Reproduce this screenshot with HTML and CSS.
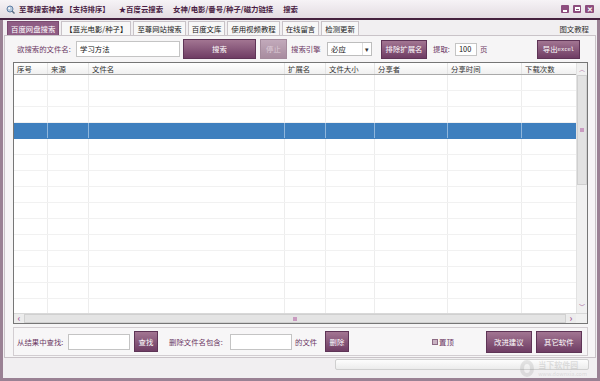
FILE: index.html
```html
<!DOCTYPE html>
<html lang="zh-CN">
<head>
  <meta charset="UTF-8" />
  <title>至尊搜索神器</title>
  <link rel="stylesheet" href="styles.css">
</head>
<body>
  <div class="window">
    <header class="titlebar">
      <svg class="app-icon" width="9" height="9" viewBox="0 0 9 9">
        <circle cx="4" cy="4" r="3" fill="#b9c9dc" stroke="#5f7fa6" stroke-width="1"/>
        <path d="M6 6 L8.5 8.5" stroke="#5a6b80" stroke-width="1.4"/>
        <circle cx="3.2" cy="3.2" r="1" fill="#fff"/>
      </svg>
      <span class="t1">至尊搜索神器</span>
      <span class="t2">【支持排序】</span>
      <span class="t3">★百度云搜索</span>
      <span class="t4">女神/电影/番号/种子/磁力链接</span>
      <span class="t5">搜索</span>
      <div class="win-btns">
        <span class="wb min"><i></i></span>
        <span class="wb max"><i></i></span>
        <span class="wb close">✕</span>
      </div>
    </header>

    <div class="frame">
      <nav class="tabs">
        <span class="tab active">百度网盘搜索</span>
        <span class="tab">【蓝光电影/种子】</span>
        <span class="tab">至尊网站搜索</span>
        <span class="tab">百度文库</span>
        <span class="tab">使用视频教程</span>
        <span class="tab">在线留言</span>
        <span class="tab">检测更新</span>
        <span class="help">图文教程</span>
      </nav>

      <section class="page">
        <div class="toolbar">
          <span class="label l-name">欲搜索的文件名:</span>
          <span class="input i-name">学习方法</span>
          <span class="btn b-search">搜索</span>
          <span class="btn disabled b-stop">停止</span>
          <span class="label l-engine">搜索引擎</span>
          <span class="select">必应<i class="drop">▾</i></span>
          <span class="btn b-ext">排除扩展名</span>
          <span class="label l-take">提取:</span>
          <span class="input i-pages">100</span>
          <span class="label l-page">页</span>
          <span class="btn b-export">导出<small>excel</small></span>
        </div>

        <div class="grid">
          <div class="grid-main">
            <div class="cols">
              <div class="row head">
                <span>序号</span><span>来源</span><span>文件名</span><span>扩展名</span><span>文件大小</span><span>分享者</span><span>分享时间</span><span>下载次数</span>
              </div>
              <div class="row"><span></span><span></span><span></span><span></span><span></span><span></span><span></span><span></span></div>
              <div class="row"><span></span><span></span><span></span><span></span><span></span><span></span><span></span><span></span></div>
              <div class="row"><span></span><span></span><span></span><span></span><span></span><span></span><span></span><span></span></div>
              <div class="row selected"><span></span><span></span><span></span><span></span><span></span><span></span><span></span><span></span></div>
              <div class="row"><span></span><span></span><span></span><span></span><span></span><span></span><span></span><span></span></div>
              <div class="row"><span></span><span></span><span></span><span></span><span></span><span></span><span></span><span></span></div>
              <div class="row"><span></span><span></span><span></span><span></span><span></span><span></span><span></span><span></span></div>
              <div class="row"><span></span><span></span><span></span><span></span><span></span><span></span><span></span><span></span></div>
              <div class="row"><span></span><span></span><span></span><span></span><span></span><span></span><span></span><span></span></div>
              <div class="row"><span></span><span></span><span></span><span></span><span></span><span></span><span></span><span></span></div>
              <div class="row"><span></span><span></span><span></span><span></span><span></span><span></span><span></span><span></span></div>
              <div class="row"><span></span><span></span><span></span><span></span><span></span><span></span><span></span><span></span></div>
              <div class="row"><span></span><span></span><span></span><span></span><span></span><span></span><span></span><span></span></div>
              <div class="row"><span></span><span></span><span></span><span></span><span></span><span></span><span></span><span></span></div>
              <div class="row"><span></span><span></span><span></span><span></span><span></span><span></span><span></span><span></span></div>
            </div>
            <div class="vscroll">
              <span class="arrow">︿</span>
              <span class="thumb"><i class="grip"></i></span>
              <span class="track"></span>
              <span class="arrow">﹀</span>
            </div>
          </div>
          <div class="hscroll">
            <span class="arrow">‹</span>
            <span class="thumb"><i class="grip"></i></span>
            <span class="arrow">›</span>
            <span class="corner"></span>
          </div>
        </div>

        <div class="bottom">
          <span class="label l-find">从结果中查找:</span>
          <span class="input i-find"></span>
          <span class="btn b-find">查找</span>
          <span class="label l-del">删除文件名包含:</span>
          <span class="input i-del"></span>
          <span class="label l-file">的文件</span>
          <span class="btn b-del">删除</span>
          <span class="check"><i></i>置顶</span>
          <span class="btn b-suggest">改进建议</span>
          <span class="btn b-other">其它软件</span>
        </div>
      </section>

      <footer class="status">
        <div class="progress"></div>
      </footer>

      <div class="watermark">
        <span class="wm-logo"></span>
        <span class="wm-text"><b>当下软件园</b><small>www.downxia.com</small></span>
      </div>
    </div>
  </div>
</body>
</html>
```

FILE: styles.css
```css
/* reset */
* {
  margin: 0;
  padding: 0;
  box-sizing: border-box;
}

:root {
  --purple: #6c3864;
  --frame: #9a8194;
  --line: #c9c3c8;
  --btn-top: #a27592;
  --btn-bot: #6f3d64;
}

html, body {
  width: 600px;
  height: 381px;
  overflow: hidden;
}

body {
  font-family: "Noto Sans CJK SC", "Noto Sans", sans-serif;
  font-size: 7.4px;
  line-height: 1;
  color: #222;
  background: #f3f1f3;
}

.window {
  height: 381px;
  display: flex;
  flex-direction: column;
}

/* --- title bar ------------------------------------------------------ */
.titlebar {
  height: 20px;
  flex: none;
  display: flex;
  align-items: center;
  padding-left: 6px;
  background: linear-gradient(#f6f3f6, #e3dce2);
  border-bottom: 2px solid #45213f;
  color: #4a1d44;
  font-weight: 700;
  white-space: nowrap;
}
.app-icon { flex: none; margin-right: 4px; }
.t2 { margin-left: 2px; }
.t3 { margin-left: 9px; }
.t4 { margin-left: 10px; }
.t5 { margin-left: 10px; }

.win-btns {
  margin-left: auto;
  margin-right: 6px;
  display: flex;
  gap: 4px;
}
.wb {
  width: 8px;
  height: 8px;
  background: #8d4d7e;
  border-radius: 1px;
  display: flex;
  align-items: center;
  justify-content: center;
  color: #fff;
  font-size: 7px;
}
.wb.close { width: 9px; }
.wb.min i { width: 4px; height: 2px; background: #fff; margin-top: 3px; }
.wb.max i { width: 5px; height: 4px; border: 1px solid #fff; border-top-width: 2px; }

/* --- frame ---------------------------------------------------------- */
.frame {
  position: relative;
  flex: 1;
  display: flex;
  flex-direction: column;
  border: 3px solid var(--frame);
  border-top: 0;
  background: #f1eff1;
}

.tabs {
  height: 15px;
  display: flex;
  align-items: flex-end;
  padding-left: 4px;
  gap: 2px;
}
.tab {
  height: 14px;
  padding: 0 3px;
  display: flex;
  align-items: center;
  border: 1px solid var(--line);
  border-bottom: 0;
  background: #f7f7f7;
  color: #222;
  white-space: nowrap;
}
.tab.active {
  background: #8e5c84;
  border-color: #7a4a70;
  color: #fff;
}
.help {
  margin-left: auto;
  margin-right: 8px;
  align-self: center;
  padding-top: 2px;
  color: #333;
}

.page {
  margin: 0 1px;
  height: 323px;
  flex: none;
  border: 1px solid var(--line);
  background: #f6f5f6;
  padding: 3px 7px 1px 8px;
  display: flex;
  flex-direction: column;
  gap: 3px;
}

/* --- controls ------------------------------------------------------- */
.toolbar, .bottom {
  display: flex;
  align-items: center;
  white-space: nowrap;
}
.toolbar { height: 20px; flex: none; }

.label { color: var(--purple); }
.input {
  height: 16px;
  display: flex;
  align-items: center;
  padding-left: 3px;
  background: #fff;
  border: 1px solid #c4c4c4;
  color: #111;
}
.btn {
  height: 20px;
  display: flex;
  align-items: center;
  justify-content: center;
  background: linear-gradient(var(--btn-top), var(--btn-bot));
  border: 1px solid #5e3456;
  color: #fff;
}
.btn.disabled {
  background: linear-gradient(#c2aabb, #a88c9f);
  border-color: #a48a9c;
  color: #dccbd7;
}
.btn small {
  display: block;
  font-size: 5.5px;
  line-height: 1;
  margin-top: 1px;
  font-family: "DejaVu Sans Mono", monospace;
}

.l-name { margin-left: 4px; width: 59px; }
.i-name { width: 104px; }
.b-search { margin-left: 3px; width: 73px; }
.b-stop { margin-left: 4px; width: 27px; }
.l-engine { margin-left: 4px; width: 32px; }
.select {
  margin-left: 4px;
  width: 45px;
  height: 14px;
  display: flex;
  align-items: center;
  padding-left: 3px;
  background: #fff;
  border: 1px solid #bdbdbd;
  color: #111;
}
.drop {
  margin-left: auto;
  width: 9px;
  height: 12px;
  display: flex;
  align-items: center;
  justify-content: center;
  border-left: 1px solid #ddd;
  font-style: normal;
  font-size: 7px;
  color: #333;
}
.b-ext { margin-left: 9px; width: 46px; height: 19px; }
.l-take { margin-left: 6px; width: 20px; }
.i-pages { margin-left: 2px; width: 22px; height: 13px; }
.l-page { margin-left: 3px; }
.b-export { margin-left: auto; margin-right: 8px; width: 43px; height: 19px; }

/* --- grid ----------------------------------------------------------- */
.grid {
  height: 262px;
  flex: none;
  border: 1px solid #767676;
  background: #fff;
  display: flex;
  flex-direction: column;
}
.grid-main {
  height: 250px;
  display: flex;
}
.cols {
  width: 562px;
  overflow: hidden;
}
.row {
  height: 16px;
  display: grid;
  grid-template-columns: 34px 41px 196px 41px 49px 73px 74px 54px;
  border-bottom: 1px solid #f1f1f1;
}
.row span { border-right: 1px solid #ededed; }
.row span:last-child { border-right: 0; }
.row.head {
  height: 12px;
  background: linear-gradient(#fff, #f0f0f0);
  border-bottom: 1px solid #a9a9a9;
  color: #333;
}
.row.head span {
  padding-left: 3px;
  line-height: 11px;
  border-right-color: #e4e4e4;
}
.row.selected { background: #3e7fbe; border-bottom-color: #3e7fbe; }
.row.selected span { border-right-color: #8fb6dc; }

.vscroll {
  width: 11px;
  display: flex;
  flex-direction: column;
  background: #f0f0f0;
  border-left: 1px solid #e2e2e2;
}
.vscroll .arrow {
  height: 12px;
  display: flex;
  align-items: center;
  justify-content: center;
  color: #a5659a;
  font-size: 6px;
}
.vscroll .thumb {
  height: 110px;
  display: flex;
  align-items: center;
  justify-content: center;
  background: #e2e2e2;
  border: 1px solid #cfcfcf;
}
.vscroll .track { flex: 1; }
.grip { width: 4px; height: 4px; background: #c99bc0; }

.hscroll {
  height: 10px;
  display: flex;
  background: #ececec;
  border-top: 1px solid #d8d8d8;
}
.hscroll .arrow {
  width: 10px;
  display: flex;
  align-items: center;
  justify-content: center;
  color: #a5659a;
  font-size: 9px;
  font-weight: 700;
}
.hscroll .thumb {
  flex: 1;
  display: flex;
  align-items: center;
  justify-content: center;
  background: #e4e4e4;
  border: 1px solid #d0d0d0;
}
.corner { width: 11px; background: #f0f0f0; }

/* --- bottom --------------------------------------------------------- */
.bottom {
  position: relative;
  z-index: 1;
  height: 29px;
  flex: none;
  border: 1px solid #d2cdd1;
  background: #f7f6f7;
}
.l-find { margin-left: 3px; width: 51px; }
.i-find { width: 62px; }
.b-find { margin-left: 4px; width: 24px; height: 21px; }
.l-del { margin-left: 11px; width: 61px; }
.i-del { width: 62px; }
.l-file { margin-left: 3px; width: 27px; }
.b-del { margin-left: 3px; width: 24px; height: 21px; }
.check {
  margin-left: 83px;
  display: flex;
  align-items: center;
  color: var(--purple);
}
.check i {
  width: 6px;
  height: 6px;
  margin-right: 1px;
  border: 1px solid #8c6a84;
  background: #c9b3c3;
}
.b-suggest { margin-left: 32px; width: 46px; height: 22px; }
.b-other { margin-left: 4px; width: 46px; height: 22px; }

/* --- status --------------------------------------------------------- */
.status {
  flex: 1;
  display: flex;
  justify-content: flex-end;
  padding: 1px 8px 0 0;
}
.progress {
  width: 254px;
  height: 11px;
  border: 1px solid #cfcfcf;
  border-radius: 2px;
  background: linear-gradient(#fdfdfd, #ececec);
}

/* faint watermark in the bottom right corner */
.watermark {
  position: absolute;
  right: 10px;
  bottom: 1px;
  display: flex;
  align-items: center;
  gap: 4px;
  opacity: 0.2;
  pointer-events: none;
}
.wm-logo {
  width: 14px;
  height: 17px;
  border: 4px solid #8a8a8a;
  border-radius: 50%;
}
.wm-text {
  display: flex;
  flex-direction: column;
  gap: 2px;
  color: #7a7a7a;
}
.wm-text b {
  font-size: 8px;
  line-height: 8px;
}
.wm-text small {
  font-size: 5.5px;
  line-height: 6px;
}
```
